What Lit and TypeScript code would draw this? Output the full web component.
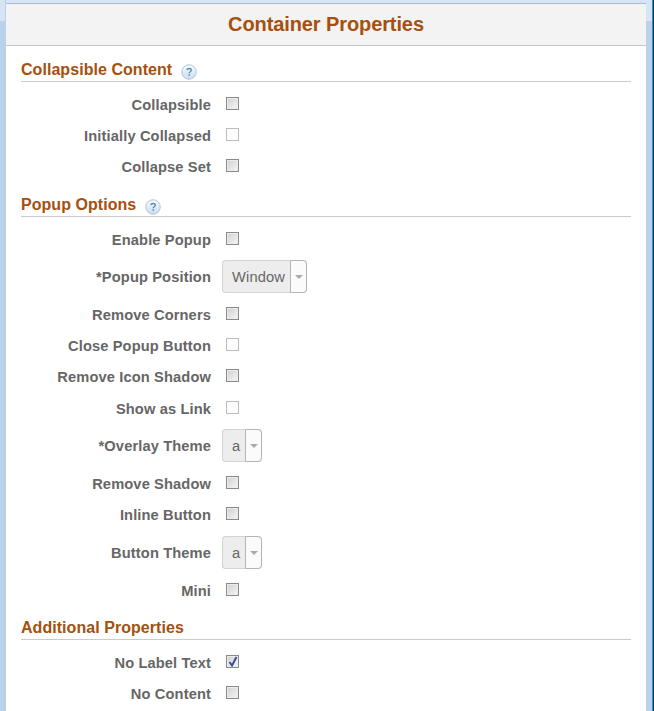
import { LitElement, html, css, svg } from "lit";
import { customElement } from "lit/decorators.js";

type Row =
  | { kind: "check"; label: string; top: number; disabled?: boolean; checked?: boolean }
  | { kind: "select"; label: string; top: number; value: string };

const help = html`<svg class="help" width="16" height="16" viewBox="0 0 17 17" aria-hidden="true">
  <defs><linearGradient id="hg" x1="0" y1="0" x2="0" y2="1"><stop offset="0" stop-color="#fafcfe"/><stop offset="1" stop-color="#c9dcef"/></linearGradient></defs>
  <circle cx="8.5" cy="8.5" r="7.7" fill="url(#hg)" stroke="#a9c3dc"/>
  <path d="M6.2 6.6c.2-1.3 1.2-1.9 2.4-1.9 1.3 0 2.3.7 2.3 1.9 0 1.6-2.2 1.6-2.2 3.1" fill="none" stroke="#5e8ab5" stroke-width="1.5"/>
  <rect x="7.9" y="10.8" width="1.6" height="1.6" fill="#5e8ab5"/>
</svg>`;

const tick = svg`<path d="M2.5 6 5 9.5 9.5 1" fill="none" stroke="#3c4f9c" stroke-width="2"/>`;

@customElement("app-root")
export class AppRoot extends LitElement {
  static styles = css`
    :host { display: block; font-family: "Liberation Sans", Arial, sans-serif; }
    .window { width: 654px; height: 711px; box-sizing: border-box; background: #b9d1ea; padding: 0 8px 0 6px; position: relative; overflow: hidden; display: flex; flex-direction: column; }
    .cap-l, .cap-r { position: absolute; top: 0; height: 21px; width: 6px; background: #d6e5f5; }
    .cap-l { left: 0; width: 5px; }
    .cap-r { right: 2px; }
    .edge { position: absolute; right: 0; top: 0; bottom: 0; width: 1px; background: #1c2a33; }
    .edge2 { position: absolute; right: 1px; top: 0; bottom: 0; width: 1px; background: #0a9be8; }
    .topband { height: 3px; background: #d6e5f5; border-bottom: 1px solid #a7bdd4; flex: none; }
    .panel { flex: 1; background: #fff; }
    .head { height: 41px; background: #f3f3f3; border-bottom: 1px solid #c8c8c8; display: flex; align-items: center; justify-content: center; font-size: 20px; letter-spacing: -0.1px; font-weight: bold; color: #a5500f; }
    .sec { margin: 0 15px; height: 20px; border-bottom: 1px solid #cbcbcb; display: flex; align-items: flex-start; font-size: 16px; letter-spacing: 0.05px; font-weight: bold; color: #a5500f; line-height: 18px; }
    .help { margin-left: 9px; margin-top: 3px; flex: none; }
    .row { display: flex; align-items: flex-start; }
    .row.has-sel { align-items: center; }
    .lab { width: 205px; text-align: right; font-size: 14.67px; letter-spacing: 0.12px; font-weight: bold; color: #666; line-height: 16px; flex: none; }
    .box { margin-left: 15px; width: 13px; height: 13px; box-sizing: border-box; border: 1px solid #8a8a8a; background: linear-gradient(135deg, #d0d0d0, #f6f6f6); box-shadow: inset 0 0 0 1px #ececec; flex: none; }
    .box.dis { border-color: #bcbcbc; background: #fdfdfd; box-shadow: none; }
    .box svg { display: block; }
    .sel { margin-left: 11px; height: 33px; box-sizing: border-box; display: flex; align-items: stretch; border-radius: 4px; background: #ededed; box-shadow: inset 0 0 0 1px #d4d4d4; font-size: 14.67px; letter-spacing: 0.15px; color: #666; }
    .val { padding: 0 5px 0 10px; display: flex; align-items: center; }
    .arrow { width: 17px; box-sizing: border-box; background: #fbfbfb; border: 1px solid #b4b4b4; border-radius: 0 4px 4px 0; display: flex; align-items: center; justify-content: center; }
    .arrow i { display: block; width: 0; height: 0; border: 4px solid transparent; border-top: 4px solid #aaa; border-bottom: 0; }
  `;

  private sections: { title: string; help: boolean; gap: number; rows: Row[] }[] = [
    { title: "Collapsible Content", help: true, gap: 15, rows: [
      { kind: "check", label: "Collapsible", top: 15 },
      { kind: "check", label: "Initially Collapsed", top: 15, disabled: true },
      { kind: "check", label: "Collapse Set", top: 15 },
    ]},
    { title: "Popup Options", help: true, gap: 21, rows: [
      { kind: "check", label: "Enable Popup", top: 15 },
      { kind: "select", label: "*Popup Position", top: 12, value: "Window" },
      { kind: "check", label: "Remove Corners", top: 14 },
      { kind: "check", label: "Close Popup Button", top: 15, disabled: true },
      { kind: "check", label: "Remove Icon Shadow", top: 15 },
      { kind: "check", label: "Show as Link", top: 16, disabled: true },
      { kind: "select", label: "*Overlay Theme", top: 12, value: "a" },
      { kind: "check", label: "Remove Shadow", top: 14 },
      { kind: "check", label: "Inline Button", top: 15 },
      { kind: "select", label: "Button Theme", top: 13, value: "a" },
      { kind: "check", label: "Mini", top: 14 },
    ]},
    { title: "Additional Properties", help: false, gap: 20, rows: [
      { kind: "check", label: "No Label Text", top: 15, checked: true },
      { kind: "check", label: "No Content", top: 15 },
    ]},
  ];

  private renderRow(r: Row) {
    const pos = `margin-top:${r.top}px`;
    if (r.kind === "select") {
      return html`<div class="row has-sel" style=${pos}>
        <div class="lab">${r.label}</div>
        <div class="sel"><span class="val">${r.value}</span><span class="arrow"><i></i></span></div>
      </div>`;
    }
    return html`<div class="row" style=${pos}>
      <div class="lab">${r.label}</div>
      <div class="box ${r.disabled ? "dis" : ""}">${r.checked ? html`<svg width="11" height="11" viewBox="0 0 11 11">${tick}</svg>` : ""}</div>
    </div>`;
  }

  render() {
    return html`<div class="window">
      <div class="cap-l"></div><div class="cap-r"></div><div class="edge2"></div><div class="edge"></div>
      <div class="topband"></div>
      <div class="panel">
        <div class="head">Container Properties</div>
        ${this.sections.map((s) => html`
          <div class="sec" style="margin-top:${s.gap}px">${s.title}${s.help ? help : ""}</div>
          ${s.rows.map((r) => this.renderRow(r))}
        `)}
      </div>
    </div>`;
  }
}
